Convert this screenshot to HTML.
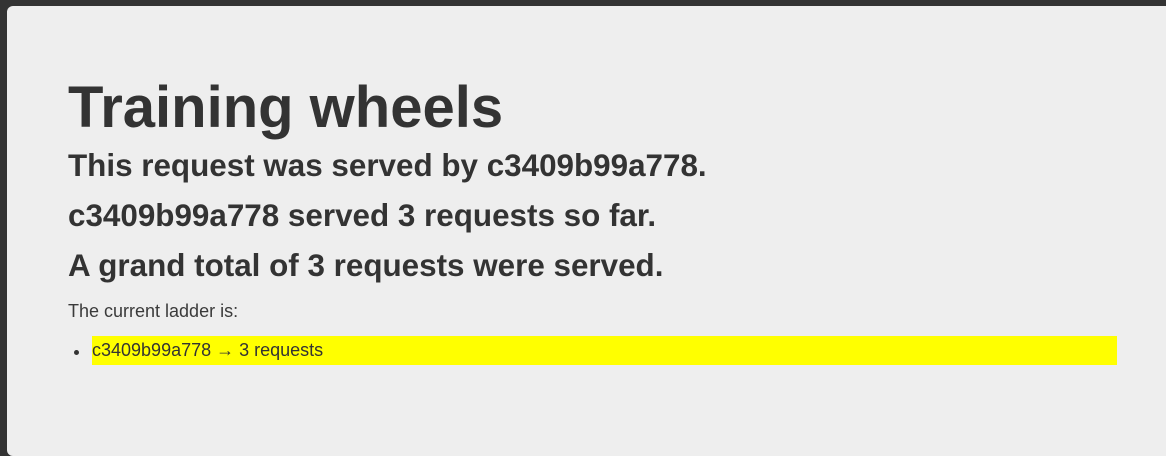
<!DOCTYPE html>
<html><head><meta charset="utf-8"><style>
html,body{margin:0;padding:0;width:1166px;height:424px;overflow:hidden;background:#333;}
.card{position:absolute;left:7px;top:6px;width:1200px;height:450px;background:#eee;border-radius:6px;font-family:"Liberation Sans",Arial,sans-serif;color:#333;}
h1{position:absolute;left:61px;top:66px;margin:0;font-size:58px;font-weight:bold;line-height:72px;}
h2{position:absolute;left:61px;margin:0;font-size:31.4px;font-weight:bold;line-height:34px;white-space:nowrap;}
p{position:absolute;left:61px;top:294px;margin:0;font-size:18px;line-height:22px;color:#3a3a3a;}
.bul{position:absolute;left:67px;top:344px;width:5px;height:5px;border-radius:50%;background:#333;}
.li{position:absolute;left:85px;top:330px;width:1025px;height:29px;background:#ff0;font-size:18px;line-height:29px;color:#333;white-space:nowrap;}
</style></head><body>
<div class="card">
<h1>Training wheels</h1>
<h2 style="top:143px">This request was served by c3409b99a778.</h2>
<h2 style="top:193px">c3409b99a778 served 3 requests so far.</h2>
<h2 style="top:243px">A grand total of 3 requests were served.</h2>
<p>The current ladder is:</p>
<div class="bul"></div>
<div class="li">c3409b99a778 → 3 requests</div>
</div>
</body></html>
